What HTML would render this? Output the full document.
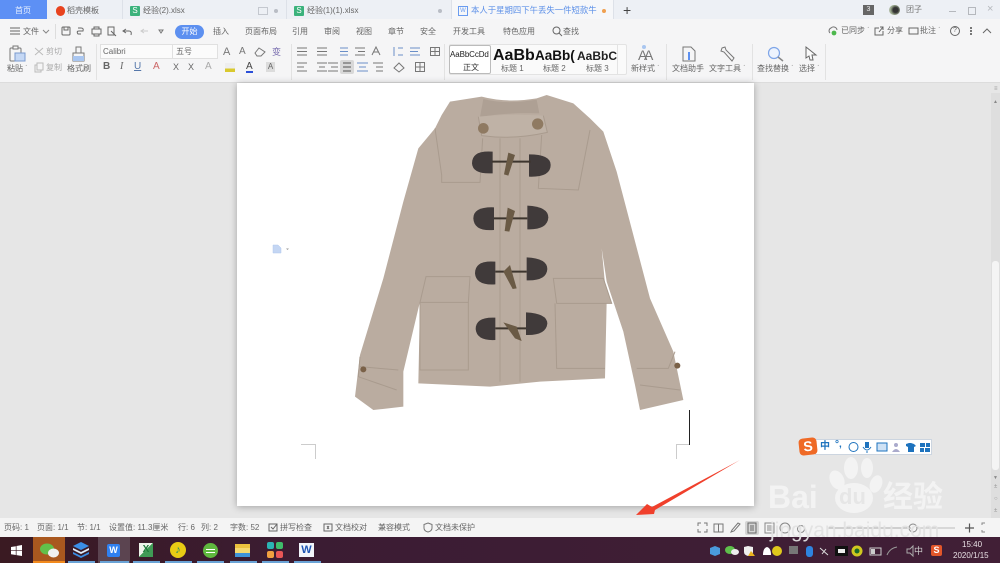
<!DOCTYPE html>
<html><head><meta charset="utf-8">
<style>
html,body{margin:0;padding:0}
body{width:1000px;height:563px;overflow:hidden;position:relative;background:#e6e6e6;font-family:"Liberation Sans","Noto Sans CJK SC",sans-serif;color:#555}
#w{position:absolute;left:0;top:0;width:1000px;height:563px;overflow:hidden;filter:blur(.35px)}
.a{position:absolute}
.t{position:absolute;white-space:nowrap;font-size:8px;line-height:10px;color:#666}
.r{font-size:8px;color:#666}
svg{position:absolute;overflow:visible}
</style></head><body><div id="w">

<!-- title bar -->
<div class="a" style="left:0;top:0;width:1000px;height:19px;background:#edf0f5"></div>
<div class="a" style="left:0;top:0;width:47px;height:19px;background:#5d90f5"></div>
<div class="t" style="left:15px;top:6px;color:#e8f0ff">首页</div>
<div class="a" style="left:56px;top:6px;width:9px;height:10px;border-radius:5px;background:#e8431f"></div>
<div class="t" style="left:67px;top:6px">稻壳模板</div>
<div class="a" style="left:122px;top:0;width:1px;height:19px;background:#dde1e8"></div>
<div class="a" style="left:130px;top:6px;width:10px;height:10px;background:#3bb27c;border-radius:1px;color:#fff;font-size:8px;line-height:10px;text-align:center">S</div>
<div class="t" style="left:143px;top:6px">经验(2).xlsx</div>
<div class="a" style="left:258px;top:7px;width:8px;height:6px;border:1px solid #c4c8cf"></div>
<div class="a" style="left:274px;top:9px;width:4px;height:4px;border-radius:2px;background:#b9bdc5"></div>
<div class="a" style="left:286px;top:0;width:1px;height:19px;background:#dde1e8"></div>
<div class="a" style="left:294px;top:6px;width:10px;height:10px;background:#3bb27c;border-radius:1px;color:#fff;font-size:8px;line-height:10px;text-align:center">S</div>
<div class="t" style="left:307px;top:6px">经验(1)(1).xlsx</div>
<div class="a" style="left:438px;top:9px;width:4px;height:4px;border-radius:2px;background:#b9bdc5"></div>
<div class="a" style="left:451px;top:0;width:163px;height:19px;background:#f6f7f9;border-left:1px solid #dde1e8;border-right:1px solid #dde1e8;box-sizing:border-box"></div>
<div class="a" style="left:458px;top:6px;width:8px;height:8px;border:1px solid #6a9cf0;color:#6a9cf0;font-size:6px;line-height:8px;text-align:center">W</div>
<div class="t" style="left:471px;top:5px;color:#5d90e8;font-size:8.4px">本人于星期四下午丢失一件短款牛</div>
<div class="a" style="left:602px;top:9px;width:4px;height:4px;border-radius:2px;background:#f0a050"></div>
<div class="t" style="left:623px;top:3px;font-size:14px;line-height:14px;color:#444">+</div>
<div class="a" style="left:863px;top:5px;width:11px;height:10px;background:#666;color:#eee;font-size:7px;line-height:10px;text-align:center">3</div>
<div class="a" style="left:889px;top:5px;width:11px;height:10px;border-radius:6px;background:radial-gradient(circle at 60% 50%,#333 0 30%,#9aa88c 60%,#c8cfc0)"></div>
<div class="t" style="left:906px;top:5px;color:#777">团子</div>
<div class="a" style="left:949px;top:11px;width:7px;height:1px;background:#b5b8bd"></div>
<div class="a" style="left:968px;top:7px;width:6px;height:6px;border:1px solid #b5b8bd"></div>
<div class="t" style="left:987px;top:4px;font-size:11px;color:#b5b8bd">×</div>

<!-- ribbon -->
<div class="a" style="left:0;top:19px;width:1000px;height:63px;background:#f5f5f6;border-bottom:1px solid #dcdcdc"></div>
<svg style="left:10px;top:27px" width="10" height="8"><path d="M0 1H10M0 4H10M0 7H10" stroke="#666" fill="none"/></svg>
<div class="t" style="left:23px;top:27px">文件</div>
<svg style="left:42px;top:29px" width="8" height="5"><path d="M1 1L4 4L7 1" stroke="#888" fill="none"/></svg>
<div class="a" style="left:55px;top:24px;width:1px;height:15px;background:#ddd"></div>
<svg style="left:61px;top:26px" width="105" height="11"><g stroke="#666" fill="none"><rect x="1" y="1" width="8" height="8" rx="1"/><path d="M3 1V4H7V1"/><path d="M17 2H20Q23 2 22 5H18Q15 5 17 8H20"/><rect x="31" y="3" width="9" height="5"/><path d="M33 3V1H38V3M33 8V10H38V8"/><path d="M47 1H53V9H47ZM50 5L55 10"/><path d="M65 3L62 5L65 7M62 5H68Q71 5 70 9"/></g><path d="M84 3L87 5L84 7M87 5H80" stroke="#ccc" fill="none" transform="matrix(-1 0 0 1 167 0)"/><path d="M98 4L100 7L102 4Z" fill="none" stroke="#777"/></svg>
<div class="a" style="left:175px;top:25px;width:29px;height:14px;border-radius:7px;background:#5d90f0;color:#fff;font-size:8px;line-height:14px;text-align:center">开始</div>
<div class="t" style="left:213px;top:27px">插入</div>
<div class="t" style="left:245px;top:27px">页面布局</div>
<div class="t" style="left:292px;top:27px">引用</div>
<div class="t" style="left:324px;top:27px">审阅</div>
<div class="t" style="left:356px;top:27px">视图</div>
<div class="t" style="left:388px;top:27px">章节</div>
<div class="t" style="left:420px;top:27px">安全</div>
<div class="t" style="left:453px;top:27px">开发工具</div>
<div class="t" style="left:503px;top:27px">特色应用</div>
<svg style="left:552px;top:26px" width="10" height="11"><circle cx="4.500" cy="4.500" r="3.500" stroke="#666" fill="none"/><path d="M7 7L10 10" stroke="#666"/></svg>
<div class="t" style="left:563px;top:27px">查找</div>

<svg style="left:828px;top:25px" width="10" height="11"><path d="M2 8A3 3 0 0 1 3 3A3.500 3.500 0 0 1 9 5" stroke="#777" fill="none"/><circle cx="6" cy="8" r="2.400" fill="#4db84d"/></svg>
<div class="t" style="left:841px;top:26px">已同步 ˙</div>
<svg style="left:874px;top:26px" width="11" height="10"><path d="M5 2H1V9H9V5M5 6L9 1M6 1H9V4" stroke="#666" fill="none"/></svg>
<div class="t" style="left:887px;top:26px">分享</div>
<svg style="left:908px;top:26px" width="11" height="10"><rect x="1" y="2" width="9" height="6" stroke="#666" fill="none"/></svg>
<div class="t" style="left:920px;top:26px">批注 ˙</div>
<svg style="left:950px;top:26px" width="10" height="10"><circle cx="5" cy="5" r="4.500" stroke="#666" fill="none"/></svg>
<div class="t" style="left:953px;top:27px;font-size:7px;line-height:8px">?</div>
<div class="a" style="left:970px;top:27px;width:2px;height:2px;background:#777;box-shadow:0 3px #777,0 6px #777"></div>
<svg style="left:982px;top:28px" width="10" height="6"><path d="M1 5L5 1L9 5" stroke="#666" fill="none"/></svg>

<!-- clipboard -->
<svg style="left:9px;top:45px" width="17" height="18"><rect x="1" y="3" width="11" height="13" rx="1" stroke="#777" fill="none"/><rect x="6" y="8" width="10" height="8" fill="#c5d8f5" stroke="#7a9bd0"/><rect x="4" y="1" width="5" height="3" stroke="#777" fill="#f5f5f6"/></svg>
<div class="t" style="left:7px;top:64px">粘贴 ˙</div>
<svg style="left:34px;top:47px" width="10" height="10"><path d="M1 1L9 8M9 1L1 8" stroke="#bbb" fill="none"/></svg>
<div class="t" style="left:46px;top:47px;color:#aaa">剪切</div>
<svg style="left:34px;top:62px" width="10" height="11"><rect x="1" y="3" width="6" height="7" stroke="#bbb" fill="none"/><rect x="3" y="1" width="6" height="7" stroke="#bbb" fill="#f5f5f6"/></svg>
<div class="t" style="left:46px;top:63px;color:#aaa">复制</div>
<svg style="left:71px;top:45px" width="15" height="17"><path d="M5 8V2H10V8M2 8H13V16H2Z" stroke="#777" fill="none"/><rect x="2" y="11" width="11" height="5" fill="#a9c6f0"/></svg>
<div class="t" style="left:67px;top:64px">格式刷</div>
<div class="a" style="left:96px;top:44px;width:1px;height:36px;background:#e2e2e2"></div>

<!-- font -->
<div class="a" style="left:100px;top:44px;width:118px;height:15px;box-sizing:border-box;border:1px solid #e0e0e0;background:#fbfbfb"></div>
<div class="a" style="left:172px;top:45px;width:1px;height:13px;background:#e0e0e0"></div>
<div class="t" style="left:103px;top:47px;font-size:8px">Calibri</div>
<div class="t" style="left:176px;top:47px">五号</div>
<div class="t" style="left:223px;top:47px;font-size:11px;color:#777">A</div>
<div class="t" style="left:239px;top:47px;font-size:10px;color:#777">A</div>
<svg style="left:254px;top:47px" width="12" height="10"><path d="M1 6L5 1L11 5L7 9H3Z" stroke="#777" fill="none"/></svg>
<div class="t" style="left:272px;top:47px;color:#7a6fb0;font-size:9px">变</div>
<div class="t" style="left:103px;top:62px;font-size:10px;font-weight:bold">B</div>
<div class="t" style="left:120px;top:62px;font-size:10px;font-style:italic;font-family:'Liberation Serif'">I</div>
<div class="t" style="left:134px;top:62px;font-size:10px;text-decoration:underline;color:#5577aa">U</div>
<div class="t" style="left:153px;top:62px;font-size:10px;color:#c66">A</div>
<div class="t" style="left:173px;top:62px;font-size:9px">X</div>
<div class="t" style="left:188px;top:62px;font-size:9px">X</div>
<div class="t" style="left:205px;top:62px;font-size:10px;color:#aaa">A</div>
<div class="a" style="left:225px;top:63px;width:10px;height:9px;background:linear-gradient(#eee 0 60%,#d9c92f 60%)"></div>
<div class="t" style="left:246px;top:62px;font-size:10px;color:#444;border-bottom:2px solid #2b4fd8;line-height:9px">A</div>
<div class="a" style="left:266px;top:62px;width:9px;height:10px;background:#dcdcdc;color:#666;font-size:8px;line-height:10px;text-align:center">A</div>
<div class="a" style="left:291px;top:44px;width:1px;height:36px;background:#e2e2e2"></div>

<!-- paragraph -->
<svg style="left:0;top:0" width="450" height="80">
<rect x="340" y="60" width="14" height="14" rx="2" fill="#d8d8d8"/>
<g stroke="#777" fill="none">
<path d="M297 48H307M297 51.500H307M297 55H307"/>
<path d="M317 48H327M317 51.500H327M317 55H327"/>
<path d="M340 48H348M340 51.500H348M340 55H348" stroke="#6a8fc8"/>
<path d="M355 48H365M358 51.500H365M355 55H365"/>
<path d="M372 55L376 47L380 55M373.500 52H378.500"/>
<path d="M394 47V56M398 48H403M398 55H403" stroke="#6a8fc8"/>
<path d="M410 48H420M410 51.500H418M410 55H420" stroke="#6a8fc8"/>
<rect x="430.500" y="47.500" width="9" height="8"/>
<path d="M435 47.500V55.500M430.500 51.500H439.500"/>
<path d="M297 63H307M297 67H304M297 71H307"/>
<path d="M317 63H327M319 67H325M317 71H327"/>
<path d="M328 63H338M331 67H338M328 71H338"/>
<path d="M343 63H351M343 67H351M343 71H351" stroke="#555"/>
<path d="M357 63H368M359 67H366M357 71H368" stroke="#6a8fc8"/>
<path d="M373 63H383M376 67H383M376 71H383"/>
<path d="M394 68L399 63L404 68L399 72Z"/>
<rect x="415.500" y="62.500" width="9" height="9"/>
<path d="M420 62.500V71.500M415.500 67H424.500"/>
</g>
</svg>
<div class="a" style="left:444px;top:44px;width:1px;height:36px;background:#e2e2e2"></div>

<!-- styles -->
<div class="a" style="left:449px;top:44px;width:178px;height:31px;box-sizing:border-box;border:1px solid #e3e3e3;background:#fafafa;border-radius:2px"></div>
<div class="a" style="left:449px;top:45px;width:42px;height:29px;box-sizing:border-box;border:1px solid #bbb;border-radius:2px;background:#fff"></div>
<div class="t" style="left:450px;top:50px;font-size:8px;color:#222;letter-spacing:-.1px">AaBbCcDd</div>
<div class="t" style="left:463px;top:63px;color:#333">正文</div>
<div class="a" style="left:492px;top:45px;width:42px;height:19px;overflow:hidden"><div class="t" style="left:1px;top:2px;font-size:16px;line-height:17px;font-weight:bold;color:#111">AaBb</div></div>
<div class="t" style="left:501px;top:64px">标题 1</div>
<div class="a" style="left:535px;top:46px;width:41px;height:18px;overflow:hidden"><div class="t" style="left:0;top:2px;font-size:13.500px;line-height:15px;font-weight:bold;color:#111">AaBb(</div></div>
<div class="t" style="left:543px;top:64px">标题 2</div>
<div class="a" style="left:577px;top:46px;width:40px;height:18px;overflow:hidden"><div class="t" style="left:0;top:3px;font-size:12px;line-height:14px;font-weight:bold;color:#222">AaBbC</div></div>
<div class="t" style="left:586px;top:64px">标题 3</div>
<div class="a" style="left:617px;top:45px;width:1px;height:29px;background:#e3e3e3"></div>
<div class="t" style="left:638px;top:48px;font-size:14px;line-height:15px;color:#777">A</div>
<div class="t" style="left:644px;top:48px;font-size:14px;line-height:15px;color:#777">A</div>
<div class="a" style="left:642px;top:45px;width:4px;height:4px;border-radius:2px;background:#a9c6f0"></div>
<div class="t" style="left:631px;top:64px">新样式 ˙</div>
<div class="a" style="left:666px;top:44px;width:1px;height:36px;background:#e2e2e2"></div>

<svg style="left:681px;top:46px" width="16" height="17"><path d="M2 1H10L14 5V15H2Z" stroke="#777" fill="none"/><path d="M8 6V14" stroke="#5d90f0" stroke-width="2"/></svg>
<div class="t" style="left:672px;top:64px">文档助手</div>
<svg style="left:720px;top:46px" width="16" height="16"><path d="M2 2L5 1L6 4L14 12L12 15L4 6L1 5Z" stroke="#777" fill="none"/></svg>
<div class="t" style="left:709px;top:64px">文字工具 ˙</div>
<div class="a" style="left:752px;top:44px;width:1px;height:36px;background:#e2e2e2"></div>
<svg style="left:767px;top:46px" width="17" height="16"><circle cx="7" cy="7" r="5.500" stroke="#7ea5e8" fill="#edf3fd" stroke-width="1.200"/><path d="M11 11L16 15" stroke="#888" stroke-width="1.500"/></svg>
<div class="t" style="left:757px;top:64px">查找替换 ˙</div>
<svg style="left:805px;top:46px" width="12" height="15"><path d="M1 1L11 9H7L8 14L5 14L4 10L1 12Z" stroke="#666" fill="#fafafa"/></svg>
<div class="t" style="left:799px;top:64px">选择 ˙</div>
<div class="a" style="left:825px;top:44px;width:1px;height:36px;background:#e2e2e2"></div>

<!-- page -->
<div class="a" style="left:237px;top:83px;width:517px;height:423px;background:#fff;box-shadow:0 1px 7px rgba(0,0,0,.3)"></div>
<div class="a" style="left:301px;top:444px;width:14px;height:1px;background:#ccc"></div>
<div class="a" style="left:315px;top:444px;width:1px;height:15px;background:#ccc"></div>
<div class="a" style="left:676px;top:444px;width:14px;height:1px;background:#ccc"></div>
<div class="a" style="left:676px;top:444px;width:1px;height:15px;background:#ccc"></div>
<div class="a" style="left:689px;top:410px;width:1px;height:35px;background:#222"></div>
<svg style="left:272px;top:244px" width="20" height="10"><path d="M1 1H6L9 4V9H1Z" fill="#c4d6f3" stroke="#b0c8ee" stroke-width=".5"/><path d="M14 4.500H17L15.500 6Z" fill="#999"/></svg>

<!-- coat -->
<svg style="left:340px;top:85px" width="350" height="330" viewBox="0 0 1050 990">
<path d="M330 50L425 35Q500 55 590 40L620 30L700 55L750 100L790 140L830 260L880 450L930 640L1000 800L1030 945L900 975L885 900L850 740L800 590L785 490L800 650L795 880L600 890L450 905L235 895L240 650L190 860L190 965L100 975L45 935L60 810L130 580L190 350L235 190L285 130L305 90Z" fill="#baaca0"/>
<path d="M430 42Q500 60 590 44L598 85Q500 82 420 96Z" fill="#aea094"/>
<path d="M415 95Q510 85 610 92L622 142Q520 165 425 152Z" fill="#bfb2a6"/>
<g fill="none" stroke="#a99b8e" stroke-width="3">
<path d="M285 130L305 270V292H420L428 160"/>
<path d="M750 135L715 315L595 310L605 150"/>
<path d="M480 160V890M540 160V890"/>
<path d="M240 652V855H385V652"/>
<path d="M645 655L650 850H795"/>
<path d="M60 845L175 855M60 815L55 875L170 915"/>
<path d="M890 850L985 850L1005 800M900 900L1020 915"/>
<path d="M415 95L425 152Q520 165 622 142L610 92"/>
</g>
<path d="M258 575H390L385 652H240Z" fill="#baaca0" stroke="#a99b8e" stroke-width="3"/>
<path d="M640 580H790L815 655H650Z" fill="#baaca0" stroke="#a99b8e" stroke-width="3"/>
<g fill="#403a3a">
<path d="M458 200Q396 195 396 235Q398 268 458 265Z"/>
<path d="M567 208Q632 208 632 240Q632 277 567 275Z"/>
<path d="M462 367Q400 365 400 400Q402 440 462 435Z"/>
<path d="M562 362Q625 365 625 398Q622 435 562 433Z"/>
<path d="M466 530Q405 525 405 565Q408 602 466 598Z"/>
<path d="M560 517Q622 520 622 552Q620 588 560 586Z"/>
<path d="M466 698Q407 695 407 732Q410 768 466 765Z"/>
<path d="M558 682Q622 685 622 716Q618 752 558 750Z"/>
</g>
<g stroke="#3d352e" stroke-width="6" fill="none">
<path d="M456 230H572M462 400H562M466 560H560M466 730H558"/>
</g>
<g fill="#6a5a45">
<path d="M505 203L525 210L505 272L492 268Z"/>
<path d="M503 368L525 378L508 440L494 438Z"/>
<path d="M510 540L530 610L518 612L490 560Z"/>
<path d="M490 712L530 725L545 768L525 760Z"/>
</g>
<circle cx="430" cy="130" r="16" fill="#8f7a62"/>
<circle cx="593" cy="117" r="17" fill="#8f7a62"/>
<circle cx="70" cy="853" r="9" fill="#7a6148"/>
<circle cx="1012" cy="842" r="9" fill="#7a6148"/>
</svg>

<!-- watermark -->
<svg style="left:0;top:0" width="1000" height="563"><g fill="#f3f3f3"><ellipse cx="837" cy="480" rx="7" ry="10" transform="rotate(-25 837 480)"/><ellipse cx="851" cy="468" rx="7" ry="11"/><ellipse cx="867" cy="468" rx="6" ry="10"/><ellipse cx="876" cy="484" rx="6" ry="9" transform="rotate(20 876 484)"/><ellipse cx="854" cy="498" rx="19" ry="15"/></g></svg>
<div class="t" style="left:768px;top:480px;font-size:32px;line-height:34px;font-weight:bold;color:#f3f3f3">Bai</div>
<div class="t" style="left:839px;top:485px;font-size:22px;line-height:24px;font-weight:bold;color:#e6e6e6">du</div>
<div class="t" style="left:883px;top:481px;font-size:30px;line-height:34px;font-weight:bold;color:#f3f3f3;letter-spacing:0">经验</div>

<!-- arrow -->
<svg style="left:630px;top:455px" width="115" height="65"><path d="M110 5L22 52L17 49L6 60L24 59L25 55Z" fill="#f0402c"/></svg>

<!-- sogou -->
<div class="a" style="left:815px;top:439px;width:117px;height:16px;box-sizing:border-box;background:#fff;border:1px solid #ccd5e0"></div>
<div class="a" style="left:799px;top:438px;width:18px;height:17px;background:#ef6a26;border-radius:4px;color:#fff;font-size:14px;line-height:17px;text-align:center;font-weight:bold;transform:rotate(-6deg)">S</div>
<div class="t" style="left:820px;top:442px;font-size:10px;font-weight:bold;color:#1e73be">中</div>
<div class="t" style="left:835px;top:440px;font-size:10px;color:#1e73be;font-weight:bold">°,</div>
<svg style="left:848px;top:441px" width="84" height="13"><g stroke="#1e73be" fill="none"><circle cx="5.500" cy="6" r="4.500"/><path d="M19 1V7" stroke-width="4"/><path d="M15 6Q19 12 23 6M19 10V12"/><rect x="29" y="2" width="10" height="8" fill="#cfe2f5"/></g><circle cx="48" cy="4" r="2" fill="#aac"/><path d="M44 11Q48 5 52 11Z" fill="#aac"/><path d="M58 3L61 2H63L66 3L68 5L66 6V11H60V6L58 5Z" fill="#1e73be"/><g fill="#1e73be"><rect x="72" y="2" width="5" height="4"/><rect x="78" y="2" width="4" height="4"/><rect x="72" y="7" width="4" height="4"/><rect x="77" y="7" width="5" height="4"/></g></svg>

<!-- scrollbar -->
<div class="a" style="left:991px;top:93px;width:9px;height:425px;background:#dedede"></div>
<div class="a" style="left:992px;top:261px;width:7px;height:209px;background:#f4f4f4;border-radius:3px"></div>
<div class="t" style="left:994px;top:84px;font-size:6px;color:#999">≡</div>
<div class="t" style="left:993px;top:97px;font-size:5px;color:#888">▲</div>
<div class="t" style="left:993px;top:473px;font-size:5px;color:#888">▼</div>
<div class="t" style="left:994px;top:482px;font-size:6px;color:#999">±</div>
<div class="t" style="left:994px;top:494px;font-size:6px;color:#999">○</div>
<div class="t" style="left:994px;top:506px;font-size:6px;color:#999">±</div>

<!-- status bar -->
<div class="a" style="left:0;top:518px;width:1000px;height:19px;background:#f4f4f4"></div>
<div class="t r" style="left:4px;top:523px">页码: 1</div>
<div class="t r" style="left:37px;top:523px">页面: 1/1</div>
<div class="t r" style="left:77px;top:523px">节: 1/1</div>
<div class="t r" style="left:109px;top:523px">设置值: 11.3厘米</div>
<div class="t r" style="left:178px;top:523px">行: 6</div>
<div class="t r" style="left:201px;top:523px">列: 2</div>
<div class="t r" style="left:230px;top:523px">字数: 52</div>
<svg style="left:268px;top:523px" width="10" height="9"><rect x="1" y="1" width="8" height="7" stroke="#666" fill="none"/><path d="M3 4L5 6L9 1" stroke="#666" fill="none"/></svg>
<div class="t r" style="left:280px;top:523px">拼写检查</div>
<svg style="left:323px;top:523px" width="10" height="9"><rect x="1" y="1" width="8" height="7" stroke="#666" fill="none"/><path d="M4 3L6 6M6 3L4 6" stroke="#666"/></svg>
<div class="t r" style="left:335px;top:523px">文档校对</div>
<div class="t r" style="left:378px;top:523px">兼容模式</div>
<svg style="left:423px;top:522px" width="10" height="11"><path d="M5 1L9 2.500V6Q9 9 5 10Q1 9 1 6V2.500Z" stroke="#777" fill="none"/></svg>
<div class="t r" style="left:435px;top:523px">文档未保护</div>

<svg style="left:697px;top:522px" width="290" height="12"><g stroke="#777" fill="none"><path d="M1 4V1H4M7 1H10V4M1 7V10H4M7 10H10V7"/><path d="M17 2H26V10H17ZM21.500 2V10"/><path d="M34 10L37 9L43 2L41 1L35 8Z"/></g><rect x="48" y="-1" width="14" height="14" rx="2" fill="#d5d5d5"/><g stroke="#666" fill="none"><rect x="51" y="1" width="8" height="10"/><path d="M53 4H57M53 6H57M53 8H57"/></g><g stroke="#888" fill="none"><rect x="68" y="1" width="9" height="10"/><path d="M70 4H75M70 6H75M70 8H75"/><circle cx="88" cy="6" r="5"/><circle cx="104" cy="7" r="3.500"/><path d="M131 6H214" stroke="#aaa"/><circle cx="216" cy="6" r="4"/><path d="M220 6H258" stroke="#bbb"/></g><path d="M268 6H277M272.500 1.500V10.500" stroke="#555" stroke-width="1.200"/><path d="M285 3V1H288M285 8V10H288" stroke="#888" fill="none"/></svg>

<!-- taskbar -->
<div class="a" style="left:0;top:537px;width:1000px;height:26px;background:linear-gradient(90deg,#3a1a22,#3b1c33 30%,#411f36)"></div>
<div class="a" style="left:33px;top:537px;width:32px;height:26px;background:#a9581f"></div>
<div class="a" style="left:33px;top:561px;width:32px;height:2px;background:#f28a1d"></div>
<div class="a" style="left:98px;top:537px;width:32px;height:26px;background:#5b4450"></div>
<svg style="left:11px;top:545px" width="11" height="11"><path d="M0 2L4.800 1.200V5.200H0ZM5.500 1L11 0V5.200H5.500ZM0 5.900H4.800V10L0 9.200ZM5.500 5.900H11V11L5.500 10.100Z" fill="#fff"/></svg>
<svg style="left:40px;top:543px" width="19" height="15"><ellipse cx="7" cy="6" rx="7" ry="5.500" fill="#62c04a"/><ellipse cx="13.500" cy="10" rx="5.500" ry="4.500" fill="#f0f0f0"/></svg>
<svg style="left:73px;top:542px" width="16" height="16"><path d="M8 0L16 4L8 8L0 4Z" fill="#3a8ee6"/><path d="M0 6L8 10L16 6V8L8 12L0 8Z" fill="#dfeefc"/><path d="M0 10L8 14L16 10V12L8 16L0 12Z" fill="#3a8ee6"/></svg>
<div class="a" style="left:107px;top:544px;width:13px;height:13px;background:#2f80f0;border-radius:2px;color:#fff;font-size:9px;line-height:13px;text-align:center;font-weight:bold">W</div>
<div class="a" style="left:139px;top:543px;width:14px;height:14px;background:linear-gradient(135deg,#eef3ea 50%,#3f9a55 50%);color:#1f7a3a;font-size:10px;line-height:13px;font-weight:bold;text-align:center">X</div>
<div class="a" style="left:170px;top:542px;width:16px;height:16px;border-radius:8px;background:#e8cc14;color:#2c8f60;font-size:11px;line-height:16px;text-align:center">♪</div>
<div class="a" style="left:203px;top:543px;width:15px;height:15px;border-radius:8px;background:#5fb83e"></div>
<div class="a" style="left:206px;top:549px;width:9px;height:1px;background:#fff;box-shadow:0 3px #fff"></div>
<div class="a" style="left:235px;top:544px;width:15px;height:13px;background:linear-gradient(#ecc23e 0 30%,#f5d970 30% 70%,#3f93d8 70%)"></div>
<svg style="left:267px;top:542px" width="16" height="16"><rect x="0" y="0" width="7" height="7" rx="2" fill="#2bb3b3"/><rect x="9" y="0" width="7" height="7" rx="2" fill="#3fbd6a"/><rect x="0" y="9" width="7" height="7" rx="2" fill="#f0a040"/><rect x="9" y="9" width="7" height="7" rx="2" fill="#e85656"/></svg>
<div class="a" style="left:299px;top:543px;width:15px;height:14px;background:#f2f5fb;color:#1f55b3;font-size:11px;line-height:14px;font-weight:bold;text-align:center">W</div>
<div class="a" style="left:68px;top:561px;width:27px;height:2px;background:#6aa3d6"></div>
<div class="a" style="left:100px;top:561px;width:29px;height:2px;background:#6aa3d6"></div>
<div class="a" style="left:133px;top:561px;width:27px;height:2px;background:#6aa3d6"></div>
<div class="a" style="left:165px;top:561px;width:27px;height:2px;background:#6aa3d6"></div>
<div class="a" style="left:197px;top:561px;width:27px;height:2px;background:#6aa3d6"></div>
<div class="a" style="left:230px;top:561px;width:27px;height:2px;background:#6aa3d6"></div>
<div class="a" style="left:262px;top:561px;width:27px;height:2px;background:#6aa3d6"></div>
<div class="a" style="left:294px;top:561px;width:27px;height:2px;background:#6aa3d6"></div>

<!-- url watermark over status bar -->
<div class="t" style="left:770px;top:519px;font-size:21px;line-height:24px;color:rgba(225,225,225,.95)">jingyan.baidu.com</div>

<!-- tray -->
<svg style="left:710px;top:545px" width="225" height="12"><path d="M5 1L10 3V9L5 11L0 9V3Z" fill="#4a9bdc"/><ellipse cx="20" cy="5" rx="5" ry="4" fill="#5ec04b"/><ellipse cx="25" cy="7" rx="4" ry="3" fill="#eee"/><path d="M38 1L43 2V7Q43 10 38 11Q34 10 34 7V2Z" fill="#eee"/><path d="M41 6L45 11H38Z" fill="#e9b31e"/><path d="M53 10Q53 3 57 2Q61 3 61 10Z" fill="#fff"/><circle cx="67" cy="6" r="5" fill="#e0c91c"/><rect x="79" y="1" width="9" height="8" fill="#777"/><rect x="96" y="1" width="7" height="11" rx="3" fill="#2e84e0"/><path d="M110 3L118 10M112 9L116 4" stroke="#ddd" fill="none"/><rect x="125" y="1" width="13" height="10" fill="#111"/><rect x="128" y="4" width="7" height="4" fill="#eee"/><circle cx="147" cy="6" r="5.500" fill="#cfc820"/><circle cx="147" cy="6" r="2.500" fill="#196b2a"/><rect x="160" y="3" width="11" height="7" stroke="#ccc" fill="none"/><rect x="161" y="4" width="4" height="5" fill="#ccc"/><path d="M177 10Q180 3 187 2" stroke="#999" fill="none"/><path d="M197 4H200L203 1V11L200 8H197Z" fill="none" stroke="#aaa"/></svg>
<div class="t" style="left:914px;top:546px;font-size:9px;color:#ccc">中</div>
<div class="a" style="left:931px;top:545px;width:11px;height:11px;background:#e2562a;border-radius:2px;color:#fff;font-size:9px;line-height:11px;text-align:center;font-weight:bold">S</div>
<div class="t" style="left:962px;top:540px;font-size:8px;color:#e8e0e4">15:40</div>
<div class="t" style="left:953px;top:551px;font-size:8px;color:#e8e0e4">2020/1/15</div>

</div></body></html>
